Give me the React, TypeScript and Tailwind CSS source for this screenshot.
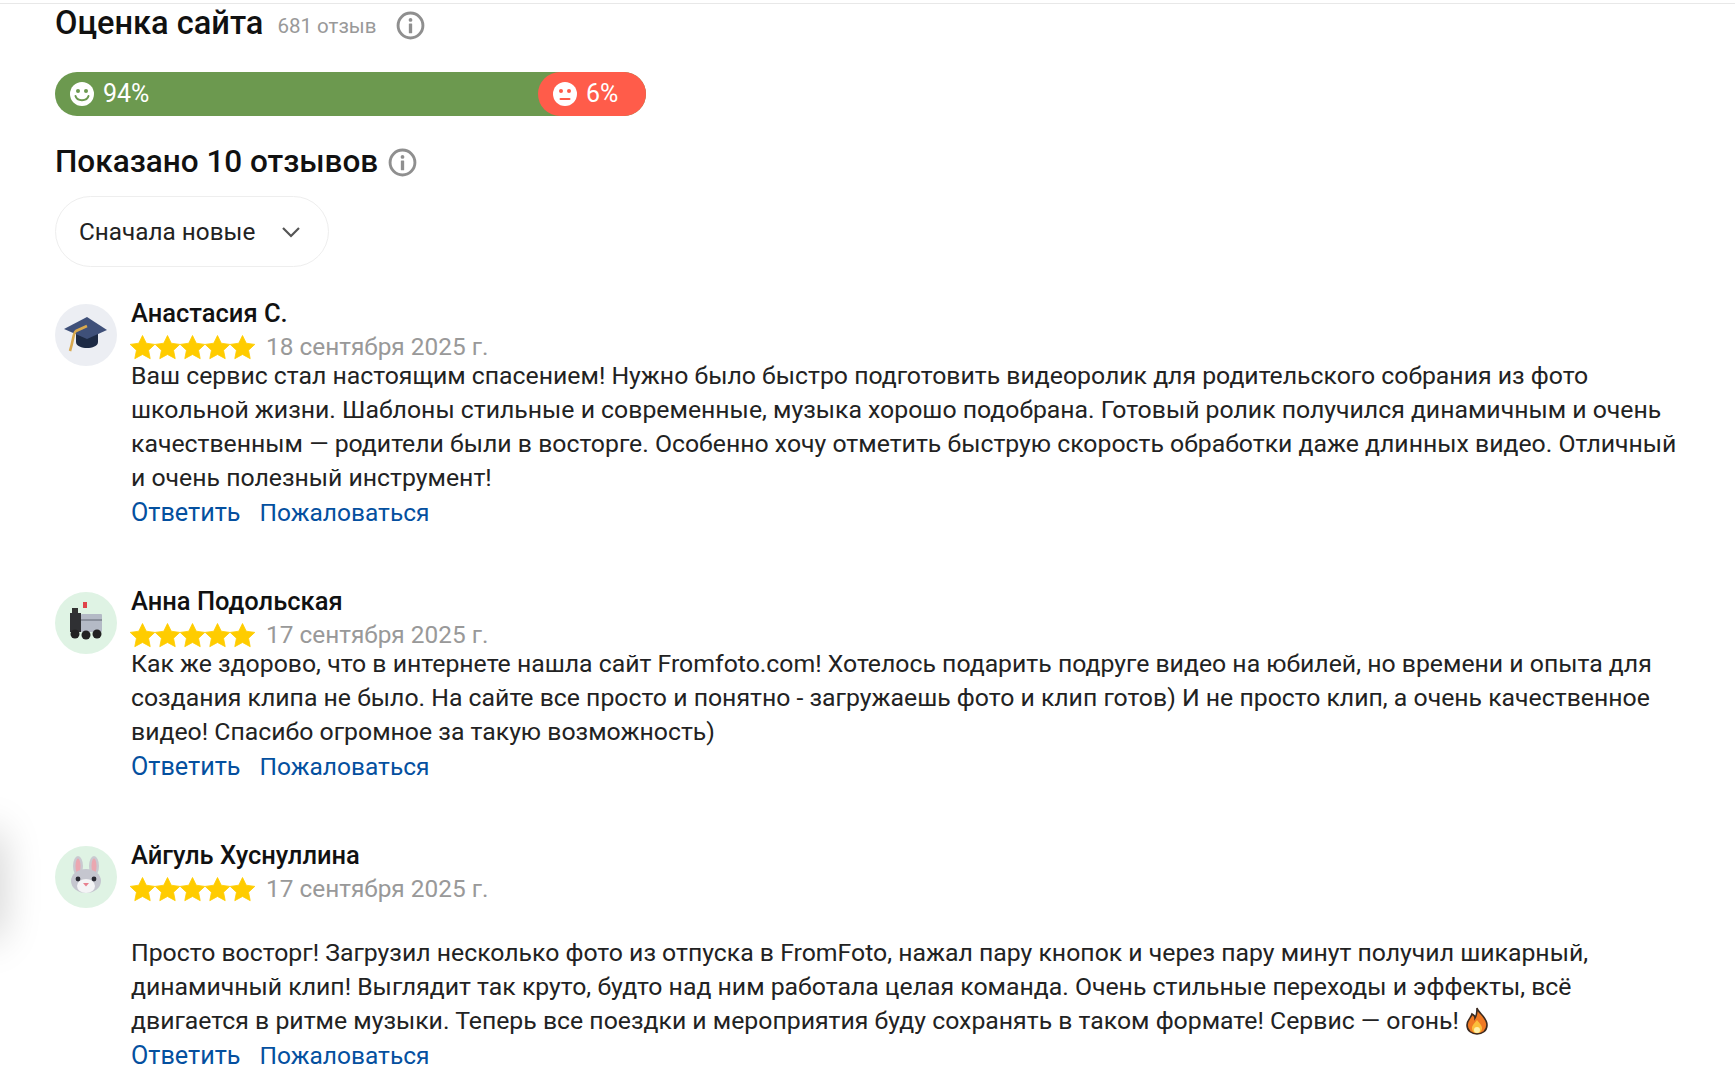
import React from 'react';

const FONT = "font-['Roboto','Liberation_Sans',sans-serif]";

function InfoIcon({ className }: { className: string }) {
  return (
    <svg viewBox="0 0 28 28" className={className} fill="none">
      <circle cx="14" cy="14" r="12" stroke="#8f8f8f" strokeWidth="2.8" />
      <circle cx="14" cy="8.6" r="1.8" fill="#8f8f8f" />
      <rect x="12.4" y="12" width="3.2" height="9.5" rx="0.6" fill="#8f8f8f" />
    </svg>
  );
}

function Smile({ sad }: { sad?: boolean }) {
  const color = sad ? '#ff5c4a' : '#6c994f';
  return (
    <svg viewBox="0 0 24 24" className="w-[24px] h-[24px] shrink-0">
      <circle cx="12" cy="12" r="12" fill="#fff" />
      <circle cx="8" cy="9" r="2" fill={color} />
      <circle cx="16" cy="9" r="2" fill={color} />
      {sad ? (
        <path d="M7.5 17 H16.5" stroke={color} strokeWidth="2" strokeLinecap="round" />
      ) : (
        <path d="M5.5 14 C7 19.5 17 19.5 18.5 14" stroke={color} strokeWidth="2" fill="none" strokeLinecap="round" />
      )}
    </svg>
  );
}

function Stars() {
  return (
    <div className="flex gap-[0px] -ml-[1px]">
      {[0, 1, 2, 3, 4].map((i) => (
        <svg key={i} viewBox="0 0 24 24" className="w-[25px] h-[25px]">
          <path d="M12 .5 l3.6 7.4 8.2 1.1 -6 5.6 1.6 8.1 -7.4-4 -7.4 4 1.6-8.1 -6-5.6 8.2-1.1z" fill="#fc0" stroke="#fc0" strokeWidth="0.8" strokeLinejoin="round" />
        </svg>
      ))}
    </div>
  );
}

function CapAvatar() {
  return (
    <svg viewBox="0 0 62 62" className="w-[62px] h-[62px]">
      <circle cx="31" cy="31" r="31" fill="#eceef3" />
      <path d="M21 27 v11 c0 4 6 6 11 6 s11-2 11-6 v-11z" fill="#1d2a44" />
      <path d="M9 25 L32 13 L52 26 L32 35z" fill="#3f5079" />
      <path d="M32 22 L21 27 C18 29 19 34 15 47" stroke="#d9a94e" strokeWidth="2.6" fill="none" />
    </svg>
  );
}

function RobotAvatar() {
  return (
    <svg viewBox="0 0 62 62" className="w-[62px] h-[62px]">
      <circle cx="31" cy="31" r="31" fill="#dff3e4" />
      <rect x="28" y="10" width="4" height="6" fill="#e0434a" />
      <rect x="17" y="16" width="6" height="6" fill="#333" />
      <rect x="15" y="21" width="11" height="19" fill="#2f3033" />
      <rect x="26" y="22" width="21" height="18" rx="1" fill="#b4bac6" />
      <rect x="26" y="27" width="21" height="2" fill="#8a909c" />
      <circle cx="20" cy="42" r="4.5" fill="#222" />
      <circle cx="31" cy="43" r="4.5" fill="#222" />
      <circle cx="42" cy="42" r="4.5" fill="#222" />
    </svg>
  );
}

function BunnyAvatar() {
  return (
    <svg viewBox="0 0 62 62" className="w-[62px] h-[62px]">
      <circle cx="31" cy="31" r="31" fill="#dff3e4" />
      <ellipse cx="23" cy="20" rx="5" ry="10" fill="#c9c9d0" />
      <ellipse cx="39" cy="20" rx="5" ry="10" fill="#c9c9d0" />
      <ellipse cx="23" cy="20" rx="2.5" ry="7.5" fill="#eba7b0" />
      <ellipse cx="39" cy="20" rx="2.5" ry="7.5" fill="#eba7b0" />
      <ellipse cx="31" cy="35" rx="15" ry="12" fill="#c5c6cf" />
      <ellipse cx="31" cy="40" rx="9" ry="7" fill="#f4f4f6" />
      <circle cx="23" cy="33" r="2.4" fill="#2b2b33" />
      <circle cx="39" cy="33" r="2.4" fill="#2b2b33" />
      <path d="M28 37 h6 l-3 3.5z" fill="#e8808f" />
    </svg>
  );
}

function Fire() {
  return (
    <svg viewBox="0 0 24 28" className="inline-block w-[24px] h-[28px] align-[-6px]">
      <path d="M12 1 C13 6 22 10 22 18 C22 24 17 27 12 27 C7 27 2 24 2 18 C2 13 6 11 7 7 C9 8 10 9 10 11 C12 8 12 4 12 1z" fill="#f07a24" stroke="#3b2a20" strokeWidth="1.6" />
      <path d="M12 13 C14 16 17 18 17 21 C17 24 15 26 12 26 C9 26 7 24 7 21 C7 18 10 16 12 13z" fill="#fbbf3a" />
      <ellipse cx="12" cy="23" rx="3" ry="3" fill="#fff0a8" />
    </svg>
  );
}

function Review({ name, date, avatar, gap, children }: { name: string; date: string; avatar: React.ReactNode; gap?: boolean; children: React.ReactNode }) {
  return (
    <div className="flex gap-[14px]">
      <div className="shrink-0 w-[62px]">{avatar}</div>
      <div className="flex-1 min-w-0">
        <div className="text-[25.5px] leading-[30px] font-medium text-[#111] -mt-[6px]">{name}</div>
        <div className={`flex items-center gap-[11px] h-[38px] ${gap ? 'mb-[28px]' : '-mb-[7px]'}`}>
          <Stars />
          <span className="text-[24.4px] text-[#999]">{date}</span>
        </div>
        <div className="text-[24.8px] leading-[34px] text-[#222]">{children}</div>
        <div className="flex gap-[19px] leading-[36px] text-[#04509f]">
          <span className="text-[25.2px]">Ответить</span>
          <span className="text-[24.5px]">Пожаловаться</span>
        </div>
      </div>
    </div>
  );
}

export default function App() {
  return (
    <div className={`${FONT} relative w-[1735px] h-[1078px] overflow-hidden bg-white`}>
      <div className="h-[4px] border-b border-[#e8e8e8]" />
      <div className="pl-[55px] pr-[48px]">
        <div className="flex items-center h-[38px]">
          <h2 className="text-[32.6px] font-medium text-[#111] leading-[38px]">Оценка сайта</h2>
          <span className="ml-[14px] mt-[7px] text-[20.5px] text-[#999]">681 отзыв</span>
          <InfoIcon className="ml-[20px] mt-[5px] w-[29px] h-[29px]" />
        </div>
        <div className="flex w-[591px] h-[44px] mt-[30px] rounded-full overflow-hidden bg-[#6c994f] text-white text-[25px]">
          <div className="flex-1 flex items-center gap-[9px] pl-[15px]">
            <Smile />
            <span>94%</span>
          </div>
          <div className="w-[108px] flex items-center gap-[9px] pl-[15px] bg-[#ff5c4a] rounded-l-full">
            <Smile sad />
            <span>6%</span>
          </div>
        </div>
        <div className="flex items-center h-[40px] mt-[26px]">
          <h2 className="text-[31.5px] font-medium text-[#111] leading-[40px]">Показано 10 отзывов</h2>
          <InfoIcon className="ml-[10px] w-[29px] h-[29px]" />
        </div>
        <div className="flex items-center justify-between w-[274px] h-[71px] mt-[14px] pl-[23px] pr-[27px] rounded-[36px] border border-[#eeeeee] text-[24.3px] text-[#222]">
          <span className="mt-[1px]">Сначала новые</span>
          <svg viewBox="0 0 20 12" className="w-[20px] h-[12px]">
            <path d="M2 2 L10 10 L18 2" stroke="#555" strokeWidth="2.2" fill="none" />
          </svg>
        </div>
        <div className="mt-[37px] flex flex-col gap-[61px]">
          <Review name="Анастасия С." date="18 сентября 2025 г." avatar={<CapAvatar />}>
            Ваш сервис стал настоящим спасением! Нужно было быстро подготовить видеоролик для родительского собрания из фото школьной жизни. Шаблоны стильные и современные, музыка хорошо подобрана. Готовый ролик получился динамичным и очень качественным — родители были в восторге. Особенно хочу отметить быструю скорость обработки даже длинных видео. Отличный и очень полезный инструмент!
          </Review>
          <Review name="Анна Подольская" date="17 сентября 2025 г." avatar={<RobotAvatar />}>
            Как же здорово, что в интернете нашла сайт Fromfoto.com! Хотелось подарить подруге видео на юбилей, но времени и опыта для создания клипа не было. На сайте все просто и понятно - загружаешь фото и клип готов) И не просто клип, а очень качественное видео! Спасибо огромное за такую возможность)
          </Review>
          <Review name="Айгуль Хуснуллина" date="17 сентября 2025 г." avatar={<BunnyAvatar />} gap>
            Просто восторг! Загрузил несколько фото из отпуска в FromFoto, нажал пару кнопок и через пару минут получил шикарный, динамичный клип! Выглядит так круто, будто над ним работала целая команда. Очень стильные переходы и эффекты, всё двигается в ритме музыки. Теперь все поездки и мероприятия буду сохранять в таком формате! Сервис — огонь! <Fire />
          </Review>
        </div>
      </div>
      <div className="absolute left-[-30px] top-[830px] w-[30px] h-[110px] rounded-[14px] bg-white shadow-[0_0_40px_rgba(0,0,0,0.22)]" />
    </div>
  );
}
